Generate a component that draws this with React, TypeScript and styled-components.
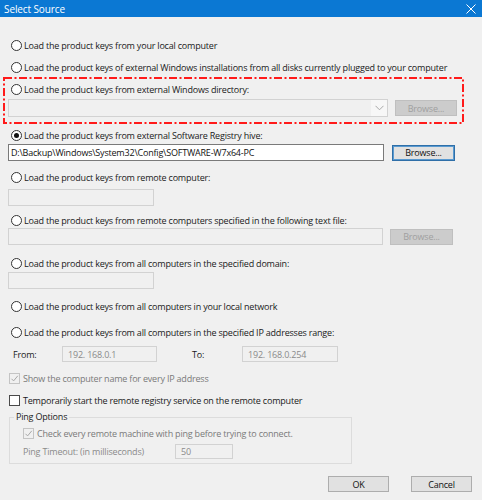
import React from "react";
import styled, { createGlobalStyle } from "styled-components";

const Global = createGlobalStyle`
  html, body { margin: 0; padding: 0; background: #f0f0f0; }
  body { font-family: "Open Sans", "Noto Sans", sans-serif; }
`;

const Window = styled.div`
  width: 482px;
  height: 500px;
  background: #f0f0f0;
  display: flex;
  flex-direction: column;
  font-family: "Open Sans", "Noto Sans", sans-serif;
  font-size: 9px;
  letter-spacing: -0.2px;
  color: #1a1a1a;
  overflow: hidden;
`;

const TitleBar = styled.div`
  height: 17px;
  background: #0b78d3;
  display: flex;
  align-items: center;
  justify-content: space-between;
  padding: 0 6px 0 4px;
  color: #fff;
`;

const Title = styled.span`
  font-size: 10px;
  letter-spacing: -0.1px;
`;

const Content = styled.div`
  display: flex;
  flex-direction: column;
  padding: 0 10px 0 8px;
`;

const OptionRow = styled.label<{ $mt: number }>`
  display: flex;
  align-items: center;
  height: 14px;
  margin-top: ${(p) => p.$mt}px;
  margin-left: 3px;
  gap: 2px;
`;

const RadioCircle = styled.span<{ $checked?: boolean }>`
  width: 9px;
  height: 9px;
  border: 1px solid #333;
  border-radius: 50%;
  background: #fff;
  display: flex;
  align-items: center;
  justify-content: center;
  flex: none;
  &::after {
    content: "";
    display: ${(p) => (p.$checked ? "block" : "none")};
    width: 5px;
    height: 5px;
    border-radius: 50%;
    background: #111;
  }
`;

const CheckRow = styled.label<{ $mt: number; $ml?: number; $disabled?: boolean }>`
  display: flex;
  align-items: center;
  height: 14px;
  margin-top: ${(p) => p.$mt}px;
  margin-left: ${(p) => p.$ml ?? 1}px;
  gap: 3px;
  color: ${(p) => (p.$disabled ? "#7a7a7a" : "#1a1a1a")};
`;

const CheckBox = styled.span<{ $disabled?: boolean }>`
  width: 9px;
  height: 9px;
  border: 1px solid ${(p) => (p.$disabled ? "#c4c4c4" : "#4a4a4a")};
  background: ${(p) => (p.$disabled ? "#f0f0f0" : "#fff")};
  display: flex;
  align-items: center;
  justify-content: center;
  flex: none;
`;

const Highlight = styled.div`
  position: relative;
  display: flex;
  flex-direction: column;
  margin-top: 8px;
`;

const DashFrame = styled.svg`
  position: absolute;
  left: -5px;
  top: -5px;
  pointer-events: none;
`;

const FieldRow = styled.div<{ $mt: number; $gap?: number }>`
  display: flex;
  align-items: center;
  margin-top: ${(p) => p.$mt}px;
  gap: ${(p) => p.$gap ?? 7}px;
`;

const TextBox = styled.div<{ $w: number; $h?: number; $enabled?: boolean }>`
  width: ${(p) => p.$w}px;
  height: ${(p) => p.$h ?? 17}px;
  box-sizing: border-box;
  border: 1px solid ${(p) => (p.$enabled ? "#7a7a7a" : "#d2d2d2")};
  background: ${(p) => (p.$enabled ? "#fff" : "#f0f0f0")};
  color: ${(p) => (p.$enabled ? "#111" : "#8a8a8a")};
  display: flex;
  align-items: center;
  padding-left: ${(p) => (p.$enabled ? 2 : 5)}px;
  flex: none;
`;

const Combo = styled.div`
  width: 380px;
  height: 18px;
  box-sizing: border-box;
  border: 1px solid #d2d2d2;
  background: #f0f0f0;
  display: flex;
  justify-content: flex-end;
  align-items: stretch;
`;

const ComboArrow = styled.div`
  width: 16px;
  background: #f7f7f7;
  display: flex;
  align-items: center;
  justify-content: center;
`;

const Button = styled.div<{ $w: number; $variant?: "disabled" | "focused" | "normal" }>`
  width: ${(p) => p.$w}px;
  height: 16px;
  box-sizing: border-box;
  display: flex;
  align-items: center;
  justify-content: center;
  flex: none;
  background: ${(p) => (p.$variant === "disabled" ? "#cccccc" : "#e1e1e1")};
  border: 1px solid
    ${(p) =>
      p.$variant === "disabled" ? "#bfbfbf" : p.$variant === "focused" ? "#2f6fa8" : "#adadad"};
  box-shadow: ${(p) => (p.$variant === "focused" ? "inset 0 0 0 1px #5a9ad0" : "none")};
  color: ${(p) => (p.$variant === "disabled" ? "#a0a0a0" : "#111")};
`;

const PlainLabel = styled.span<{ $w?: number; $ml?: number; $disabled?: boolean }>`
  width: ${(p) => (p.$w ? `${p.$w}px` : "auto")};
  margin-left: ${(p) => p.$ml ?? 0}px;
  flex: none;
  color: ${(p) => (p.$disabled ? "#8a8a8a" : "#1a1a1a")};
`;

const RangeRow = styled.div`
  display: flex;
  align-items: center;
  height: 16px;
  margin-top: 7px;
  padding-left: 5px;
`;

const Group = styled.fieldset`
  margin: 3px 0 0 1px;
  width: 343px;
  box-sizing: border-box;
  border: 1px solid #dcdcdc;
  padding: 0 0 4px 0;
  display: flex;
  flex-direction: column;
  min-width: 0;
`;

const Legend = styled.legend`
  margin-left: 4px;
  padding: 0 2px;
  height: 14px;
  line-height: 14px;
  color: #1a1a1a;
`;

const PingRow = styled.div`
  display: flex;
  align-items: center;
  margin-top: 4px;
  padding-left: 13px;
`;

const Footer = styled.div`
  display: flex;
  justify-content: flex-end;
  gap: 22px;
  margin-top: 12px;
`;

const Radio = ({ mt, checked, children }: { mt: number; checked?: boolean; children: React.ReactNode }) => (
  <OptionRow $mt={mt}>
    <RadioCircle $checked={checked} />
    <span>{children}</span>
  </OptionRow>
);

const Tick = ({ color }: { color: string }) => (
  <svg width="9" height="9" viewBox="0 0 9 9">
    <path d="M1.5 4.8 L3.6 6.9 L7.8 1.8" fill="none" stroke={color} strokeWidth="1" />
  </svg>
);

export default function App() {
  return (
    <>
      <Global />
      <Window>
        <TitleBar>
          <Title>Select Source</Title>
          <svg width="10" height="10" viewBox="0 0 10 10">
            <path d="M0.5 0.5 L9.5 9.5 M9.5 0.5 L0.5 9.5" stroke="#fff" strokeWidth="1" />
          </svg>
        </TitleBar>
        <Content>
          <Radio mt={21}>Load the product keys from your local computer</Radio>
          <Radio mt={8}>
            Load the product keys of external Windows installations from all disks currently plugged to your computer
          </Radio>
          <Highlight>
            <DashFrame width="461" height="47">
              <rect
                x="1"
                y="1"
                width="459"
                height="45"
                fill="none"
                stroke="#ff1a1a"
                strokeWidth="2"
                strokeDasharray="8 2.5 2 2.5"
              />
            </DashFrame>
            <Radio mt={0}>Load the product keys from external Windows directory:</Radio>
            <FieldRow $mt={3}>
              <Combo>
                <ComboArrow>
                  <svg width="9" height="6" viewBox="0 0 9 6">
                    <path d="M0.5 0.8 L4.5 4.8 L8.5 0.8" fill="none" stroke="#a8a8a8" strokeWidth="1" />
                  </svg>
                </ComboArrow>
              </Combo>
              <Button $w={62} $variant="disabled">Browse...</Button>
            </FieldRow>
          </Highlight>
          <Radio mt={11} checked>
            Load the product keys from external Software Registry hive:
          </Radio>
          <FieldRow $mt={2} $gap={8}>
            <TextBox $w={376} $enabled>
              D:\Backup\Windows\System32\Config\SOFTWARE-W7x64-PC
            </TextBox>
            <Button $w={63} $variant="focused">Browse...</Button>
          </FieldRow>
          <Radio mt={9}>Load the product keys from remote computer:</Radio>
          <FieldRow $mt={5}>
            <TextBox $w={146} />
          </FieldRow>
          <Radio mt={7}>Load the product keys from remote computers specified in the following text file:</Radio>
          <FieldRow $mt={1}>
            <TextBox $w={375} />
            <Button $w={63} $variant="disabled">Browse...</Button>
          </FieldRow>
          <Radio mt={11}>Load the product keys from all computers in the specified domain:</Radio>
          <FieldRow $mt={2}>
            <TextBox $w={146} />
          </FieldRow>
          <Radio mt={10}>Load the product keys from all computers in your local network</Radio>
          <Radio mt={12}>Load the product keys from all computers in the specified IP addresses range:</Radio>
          <RangeRow>
            <PlainLabel $w={49}>From:</PlainLabel>
            <TextBox $w={95} $h={16}>192. 168.0.1</TextBox>
            <PlainLabel $w={50} $ml={35}>To:</PlainLabel>
            <TextBox $w={96} $h={16}>192. 168.0.254</TextBox>
          </RangeRow>
          <CheckRow $mt={9} $disabled>
            <CheckBox $disabled>
              <Tick color="#a8a8a8" />
            </CheckBox>
            Show the computer name for every IP address
          </CheckRow>
          <CheckRow $mt={8}>
            <CheckBox />
            Temporarily start the remote registry service on the remote computer
          </CheckRow>
          <Group>
            <Legend>Ping Options</Legend>
            <CheckRow $mt={2} $ml={13} $disabled>
              <CheckBox $disabled>
                <Tick color="#a8a8a8" />
              </CheckBox>
              Check every remote machine with ping before trying to connect.
            </CheckRow>
            <PingRow>
              <PlainLabel $w={152} $disabled>
                Ping Timeout: (in milliseconds)
              </PlainLabel>
              <TextBox $w={58} $h={15}>
                50
              </TextBox>
            </PingRow>
          </Group>
          <Footer>
            <Button $w={61}>OK</Button>
            <Button $w={61}>Cancel</Button>
          </Footer>
        </Content>
      </Window>
    </>
  );
}
